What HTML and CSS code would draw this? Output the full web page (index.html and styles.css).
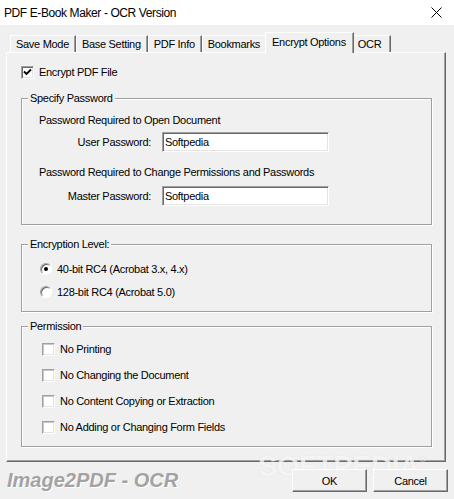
FILE: index.html
```html
<!DOCTYPE html>
<html lang="en">
<head>
  <meta charset="UTF-8">
  <title>PDF E-Book Maker - OCR Version</title>
  <link rel="stylesheet" href="styles.css">
</head>
<body>

  <div class="window">
    <div class="titlebar">
      <span class="title">PDF E-Book Maker - OCR Version</span>
      <svg class="close" width="11" height="11" viewBox="0 0 11 11">
        <path d="M0.5 0.5L10.5 10.5M10.5 0.5L0.5 10.5" stroke="#000" stroke-width="1"/>
      </svg>
    </div>

    <div class="dialog">
      <ul class="tabs">
        <li class="tab">Save Mode</li>
        <li class="tab">Base Setting</li>
        <li class="tab">PDF Info</li>
        <li class="tab">Bookmarks</li>
        <li class="tab active">Encrypt Options</li>
        <li class="tab">OCR</li>
      </ul>

      <div class="panel">
        <label class="check-row encrypt">
          <span class="box"><svg width="9" height="9" viewBox="0 0 9 9"><path d="M1 3.5L3.5 6L8 1.5" stroke="#000" stroke-width="1.8" fill="none"/></svg></span>
          Encrypt PDF File
        </label>

        <fieldset class="group">
          <legend>Specify Password</legend>
          <div class="group-body passwords">
            <p class="hint">Password Required to Open Document</p>
            <div class="field">
              <span class="field-label">User Password:</span>
              <input type="text" value="Softpedia">
            </div>
            <p class="hint second">Password Required to Change Permissions and Passwords</p>
            <div class="field master">
              <span class="field-label">Master Password:</span>
              <input type="text" value="Softpedia">
            </div>
          </div>
        </fieldset>

        <fieldset class="group level">
          <legend>Encryption Level:</legend>
          <div class="group-body radios">
            <label class="radio-row"><span class="radio on"></span>40-bit RC4 (Acrobat 3.x, 4.x)</label>
            <label class="radio-row"><span class="radio"></span>128-bit RC4 (Acrobat 5.0)</label>
          </div>
        </fieldset>

        <fieldset class="group permission">
          <legend>Permission</legend>
          <div class="group-body perms">
            <label class="check-row"><span class="box light"></span>No Printing</label>
            <label class="check-row"><span class="box light"></span>No Changing the Document</label>
            <label class="check-row"><span class="box light"></span>No Content Copying or Extraction</label>
            <label class="check-row"><span class="box light"></span>No Adding or Changing Form Fields</label>
          </div>
        </fieldset>
      </div>

      <div class="footer">
        <span class="brand">Image2PDF - OCR</span>
        <span class="watermark">SOFTPEDIA<sup>®</sup></span>
        <button class="btn">OK</button>
        <button class="btn">Cancel</button>
      </div>
    </div>
  </div>

</body>
</html>
```

FILE: styles.css
```css
:root {
  --face: #f0f0f0;
  --light: #ffffff;
  --shadow: #a0a0a0;
  --dark: #696969;
}

body {
  margin: 0;
  background: var(--face);
  font-family: 'Liberation Sans', Arial, sans-serif;
  font-size: 11px;
  letter-spacing: -0.3px;
  color: #000;
}

.window {
  width: 454px;
  height: 499px;
  overflow: hidden;
}

.titlebar {
  height: 25px;
  background: #fff;
  display: flex;
  align-items: center;
  justify-content: space-between;
  padding: 0 12px 0 4px;
}

.title {
  font-size: 12px;
  letter-spacing: -0.4px;
}

.dialog {
  position: relative;
  padding: 7px 8px 0 6px;
}

/* tabs */
.tabs {
  display: flex;
  align-items: flex-end;
  list-style: none;
  margin: 0 0 0 4px;
  padding: 0;
  height: 20px;
}

.tab {
  min-width: 39px;
  height: 17px;
  box-sizing: border-box;
  line-height: 16px;
  padding: 0 6px 0 5px;
  border-top: 1px solid var(--light);
  border-left: 1px solid var(--light);
  border-right: 1px solid var(--dark);
  box-shadow: inset -1px 0 var(--shadow);
  white-space: nowrap;
}

.tab.active {
  position: relative;
  z-index: 1;
  height: 21px;
  margin: 0 -2px -1px;
  padding: 0 7px 0 6px;
  line-height: 18px;
  background: var(--face);
}

/* panel */
.panel {
  width: 440px;
  height: 410px;
  box-sizing: border-box;
  border-top: 1px solid var(--light);
  border-left: 1px solid var(--light);
  border-right: 1px solid var(--dark);
  border-bottom: 1px solid var(--dark);
  box-shadow: inset -1px -1px var(--shadow);
  padding: 12px 13px 0 14px;
}

.check-row, .radio-row {
  display: flex;
  align-items: center;
  height: 14px;
}

.box {
  width: 13px;
  height: 13px;
  box-sizing: border-box;
  margin-right: 5px;
  background: #fff;
  border-top: 1px solid var(--shadow);
  border-left: 1px solid var(--shadow);
  border-right: 1px solid var(--light);
  border-bottom: 1px solid var(--light);
  box-shadow: inset 1px 1px var(--dark), inset -1px -1px #e3e3e3;
  display: flex;
  align-items: center;
  justify-content: center;
}

.box.light {
  box-shadow: inset 1px 1px #c8c8c8, inset -1px -1px #e3e3e3;
}

.group {
  margin: 12px 0 0;
  padding: 0;
  border: 1px solid var(--shadow);
  box-shadow: inset 1px 1px var(--light), 1px 1px var(--light);
  min-width: 0;
}

.group legend {
  margin-left: 6px;
  padding: 0 2px;
  line-height: 14px;
  background: var(--face);
}

.group-body p {
  margin: 0;
  line-height: 14px;
}

.passwords {
  padding: 8px 0 18px 17px;
}

.hint.second {
  margin-top: 13px;
}

.field {
  display: flex;
  align-items: center;
  margin-top: 5px;
}

.field.master {
  margin-top: 7px;
}

.field-label {
  width: 112px;
  margin-right: 11px;
  text-align: right;
}

.field input {
  width: 167px;
  height: 20px;
  box-sizing: border-box;
  margin: 0;
  padding: 0 2px;
  font: inherit;
  letter-spacing: inherit;
  background: #fff;
  border-top: 1px solid var(--shadow);
  border-left: 1px solid var(--shadow);
  border-right: 1px solid var(--light);
  border-bottom: 1px solid var(--light);
  box-shadow: inset 1px 1px var(--dark), inset -1px -1px #e3e3e3;
  outline: none;
}

.level {
  margin-top: 12px;
}

.radios {
  display: flex;
  flex-direction: column;
  gap: 9px;
  padding: 11px 0 12px 18px;
}

.radio {
  width: 12px;
  height: 12px;
  box-sizing: border-box;
  margin-right: 5px;
  border-radius: 50%;
  background: #fff;
  border: 1px solid;
  border-color: var(--shadow) var(--light) var(--light) var(--shadow);
  box-shadow: inset 1px 1px var(--dark);
  display: flex;
  align-items: center;
  justify-content: center;
}

.radio.on::after {
  content: '';
  width: 4px;
  height: 4px;
  border-radius: 50%;
  background: #000;
}

.permission {
  margin-top: 7px;
}

.perms {
  display: flex;
  flex-direction: column;
  gap: 12px;
  padding: 9px 0 12px 20px;
}

/* footer */
.footer {
  display: flex;
  align-items: center;
  gap: 6px;
  height: 23px;
  margin: 7px -2px 0 1px;
}

.brand {
  flex: 1;
  font-size: 20px;
  font-weight: bold;
  font-style: italic;
  letter-spacing: 0;
  color: #a3a3a3;
  text-shadow: 1px 1px #fff;
}

.watermark {
  position: absolute;
  left: 258px;
  top: 425px;
  font-size: 29px;
  font-weight: bold;
  letter-spacing: -0.5px;
  color: rgba(255, 255, 255, 0.75);
  text-shadow: 0 0 1px rgba(0, 0, 0, 0.12);
  pointer-events: none;
}

.watermark sup {
  font-size: 9px;
  vertical-align: 14px;
}

.btn {
  position: relative;
  width: 75px;
  height: 23px;
  padding: 0;
  font: inherit;
  letter-spacing: inherit;
  color: #000;
  background: var(--face);
  border-top: 1px solid var(--light);
  border-left: 1px solid var(--light);
  border-right: 1px solid var(--dark);
  border-bottom: 1px solid var(--dark);
  box-shadow: inset -1px -1px var(--shadow);
}
```
